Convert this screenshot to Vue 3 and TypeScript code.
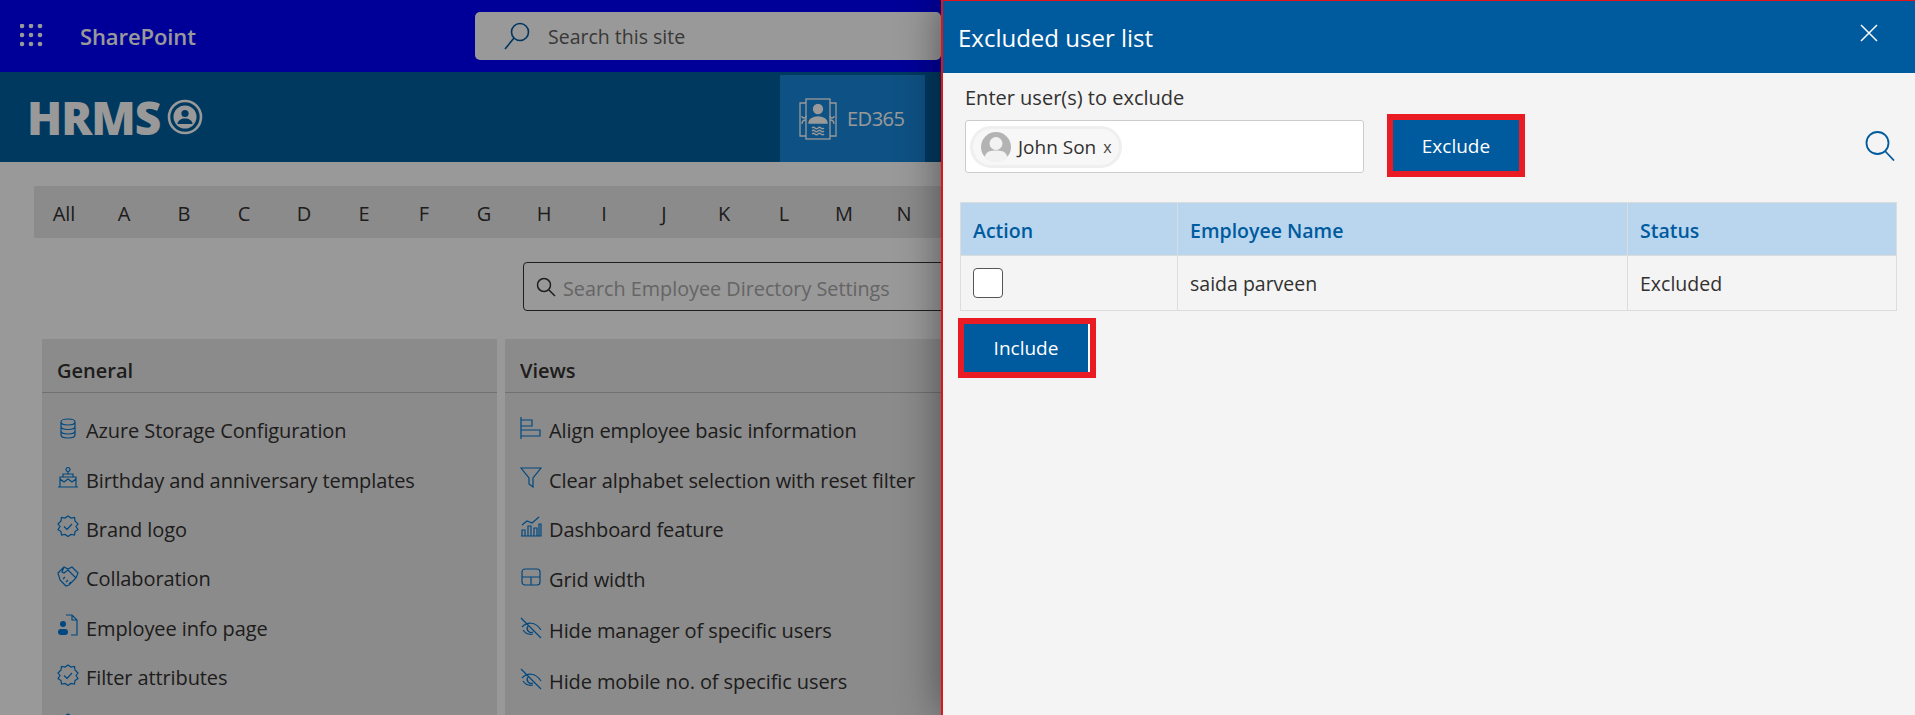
<script setup lang="ts">
const letters = ['All', ...'ABCDEFGHIJKLMN'.split('')]

const generalItems = [
  { label: 'Azure Storage Configuration', icon: 'db' },
  { label: 'Birthday and anniversary templates', icon: 'cake' },
  { label: 'Brand logo', icon: 'badge' },
  { label: 'Collaboration', icon: 'hands' },
  { label: 'Employee info page', icon: 'person' },
  { label: 'Filter attributes', icon: 'badge' },
  // only the tip of this row's icon is on screen
  { label: '', icon: 'badge' }
]

const viewItems = [
  { label: 'Align employee basic information', icon: 'align' },
  { label: 'Clear alphabet selection with reset filter', icon: 'funnel' },
  { label: 'Dashboard feature', icon: 'chart' },
  { label: 'Grid width', icon: 'grid' },
  { label: 'Hide manager of specific users', icon: 'hide' },
  { label: 'Hide mobile no. of specific users', icon: 'hide' }
]

const iconPaths: Record<string, string> = {
  db: 'M4 5c0-4 14-4 14 0v13c0 4-14 4-14 0zM4 5c0 4 14 4 14 0M4 9.500c0 4 14 4 14 0M4 14c0 4 14 4 14 0',
  cake: 'M1 21h20M3 21v-10h16v10M3 13l4 3 4-3 4 3 4-3M6 11V8h10v3M11 8V6M11 1.500a2 2 0 1 1-.01 0',
  badge: 'M11 1l3 2 3.500-.5.500 3.500 3 3-2 2.500 2 3-3 2-.5 3.500-3.500-.5-3 2-3-2-3.500.5-.5-3.500-3-2 2-3-2-2.500 3-3 .5-3.500 3.500.5zM7 11.500l3 3 5-5.500',
  hands: 'M1 8l6-6 4 2 4-2 6 6-2 5-7 7-3 1-3-3-3-3zM7 2L5 7l2 1 4-3 8 8M6 14l2-2M9 17l2-2M12 19l2-2',
  person: 'M9 1h6l5 5v15h-6M15 1v5h5',
  align: 'M1 0v22M1 3h11v6H1M1 13h19v6H1',
  funnel: 'M1 2h20l-8 10v9l-4-3v-6z',
  chart: 'M1 21h20M2 15h3v6H2zM8 11h3v10H8zM14 13h3v8h-3zM19 9h2v12h-2zM2 10l5-4 5 2 7-6',
  grid: 'M5 3h12a3 3 0 0 1 3 3v10a3 3 0 0 1-3 3H5a3 3 0 0 1-3-3V6a3 3 0 0 1 3-3zM2 11h18M11 11v8',
  hide: 'M1 1l20 20M2 10c5-5 13-6 19 3M3 13c2 3 6 5 10 4M8 9a4 4 0 0 0 5 6'
}
</script>

<template>
  <div class="page">
    <div class="behind">
      <header class="suite-bar">
        <svg class="waffle" width="24" height="24" viewBox="0 0 24 24" fill="#fff">
          <template v-for="row in 3" :key="row">
            <circle v-for="col in 3" :key="col" :cx="col * 9 - 7" :cy="row * 9 - 7" r="2.300" />
          </template>
        </svg>
        <span class="brand">SharePoint</span>
        <div class="site-search">
          <svg width="30" height="30" viewBox="0 0 30 30" fill="none" stroke="#005a9e" stroke-width="1.600">
            <circle cx="18" cy="11" r="8.500" />
            <path d="M12 17L3 28" />
          </svg>
          <span>Search this site</span>
        </div>
      </header>

      <div class="hrms-bar">
        <div class="logo">
          <span>HRMS</span>
          <svg width="36" height="36" viewBox="0 0 36 36" fill="none">
            <circle cx="18" cy="18" r="16" stroke="#fff" stroke-width="2.600" />
            <circle cx="18" cy="18" r="11.500" fill="#fff" />
            <circle cx="18" cy="14.500" r="3.600" fill="#0060a0" />
            <path d="M10.500 25c0-7.500 15-7.500 15 0z" fill="#0060a0" />
          </svg>
        </div>
        <div class="tile">
          <svg width="38" height="42" viewBox="0 0 38 42" fill="none" stroke="#fff" stroke-width="1.300">
            <path d="M7 5H1v33h6M31 5h6v33h-6" />
            <rect x="7" y="1" width="24" height="40" />
            <circle cx="19" cy="11" r="4.500" fill="#fff" />
            <path d="M10 25c0-8 18-8 18 0z" fill="#fff" />
            <path d="M3 18a2 2 0 1 0 4 0M3 26c0-3 1-4 4-4M35 18a2 2 0 1 1-4 0M35 26c0-3-1-4-4-4" />
            <path d="M13 30q1.500-1.500 3 0t3 0 3 0 3 0M13 33q1.500-1.500 3 0t3 0 3 0 3 0M13 36q1.500-1.500 3 0t3 0 3 0 3 0" />
          </svg>
          <span>ED365</span>
        </div>
      </div>

      <main class="settings">
        <nav class="alphabet">
          <a v-for="letter in letters" :key="letter">{{ letter }}</a>
        </nav>

        <div class="settings-search">
          <svg width="20" height="20" viewBox="0 0 20 20" fill="none" stroke="#333" stroke-width="1.500">
            <circle cx="8" cy="8" r="6.500" />
            <path d="M13 13l6 6" />
          </svg>
          <span>Search Employee Directory Settings</span>
        </div>

        <div class="cards">
          <section class="card">
            <h3>General</h3>
            <ul>
              <li v-for="item in generalItems" :key="item.icon + item.label">
                <svg width="22" height="22" viewBox="0 0 22 22" fill="none" stroke="#0078d4" stroke-width="1.200">
                  <path :d="iconPaths[item.icon]" />
                  <template v-if="item.icon === 'person'">
                    <circle cx="6" cy="10" r="3" fill="#0078d4" stroke="none" />
                    <rect x="1" y="15" width="10" height="6" rx="3" fill="#0078d4" stroke="none" />
                  </template>
                </svg>
                <span>{{ item.label }}</span>
              </li>
            </ul>
          </section>
          <section class="card views">
            <h3>Views</h3>
            <ul>
              <li v-for="item in viewItems" :key="item.label">
                <svg width="22" height="22" viewBox="0 0 22 22" fill="none" stroke="#0078d4" stroke-width="1.200">
                  <path :d="iconPaths[item.icon]" />
                </svg>
                <span>{{ item.label }}</span>
              </li>
            </ul>
          </section>
        </div>
      </main>
    </div>
    <div class="scrim"></div>

    <aside class="panel">
      <div class="panel-head">
        <h2>Excluded user list</h2>
        <svg width="18" height="18" viewBox="0 0 18 18" stroke="#fff" stroke-width="1.500">
          <path d="M1 1l16 16M17 1L1 17" />
        </svg>
      </div>
      <div class="panel-body">
        <label>Enter user(s) to exclude</label>
        <div class="picker-row">
          <div class="picker">
            <div class="pill">
              <svg class="avatar" width="30" height="30" viewBox="0 0 30 30">
                <circle cx="15" cy="15" r="15" fill="#b3b3b3" />
                <circle cx="15" cy="11.500" r="6.500" fill="#f2f2f2" />
                <path d="M3.500 25c2-6 6-6.500 11.500-6.500s9.500.5 11.500 6.500A15 15 0 0 1 3.500 25z" fill="#f2f2f2" />
              </svg>
              <span class="pill-name">John Son</span>
              <span class="pill-x">x</span>
            </div>
          </div>
          <div class="callout">
            <button class="btn exclude">Exclude</button>
          </div>
          <svg class="find" width="30" height="30" viewBox="0 0 30 30" fill="none" stroke="#005a9e" stroke-width="1.800">
            <circle cx="12.500" cy="12" r="11" />
            <path d="M20 20l9 9.500" />
          </svg>
        </div>

        <table>
          <thead>
            <tr>
              <th class="col-action">Action</th>
              <th class="col-name">Employee Name</th>
              <th>Status</th>
            </tr>
          </thead>
          <tbody>
            <tr>
              <td><span class="check"></span></td>
              <td>saida parveen</td>
              <td>Excluded</td>
            </tr>
          </tbody>
        </table>

        <div class="callout include-wrap">
          <button class="btn include">Include</button>
        </div>
      </div>
    </aside>
  </div>
</template>

<style scoped>
.page {
  position: relative;
  width: 1915px;
  height: 715px;
  overflow: hidden;
  font-family: "Open Sans", "Noto Sans", sans-serif;
  color: #323130;
  background: #fff;
}

.behind {
  width: 941px;
  height: 100%;
  overflow: hidden;
}

/* dims everything behind the panel */
.scrim {
  position: absolute;
  inset: 0;
  background: rgba(0, 0, 0, 0.4);
}

.suite-bar {
  height: 72px;
  background: #0000ff;
  display: flex;
  align-items: center;
  padding-left: 20px;
  box-sizing: border-box;
}

.waffle {
  flex-shrink: 0;
}

.brand {
  margin-left: 36px;
  width: 395px;
  color: #fff;
  font-size: 22px;
  font-weight: 600;
  letter-spacing: -0.1px;
}

.site-search {
  flex: 1;
  height: 48px;
  background: #fff;
  border-radius: 5px;
  display: flex;
  align-items: center;
  gap: 16px;
  padding-left: 27px;
  font-size: 19.500px;
  color: #605e5c;
}

.hrms-bar {
  height: 90px;
  background: #0060a0;
  display: flex;
  align-items: center;
  padding-left: 27px;
}

.logo {
  width: 753px;
  display: flex;
  align-items: center;
  gap: 7px;
  color: #fff;
  font-weight: 800;
  font-size: 46px;
  letter-spacing: -1px;
}

.tile {
  width: 145px;
  height: 87px;
  margin-top: 3px;
  background: #1888dc;
  display: flex;
  align-items: center;
  gap: 10px;
  padding-left: 19px;
  box-sizing: border-box;
  color: #fff;
  font-size: 20px;
  letter-spacing: -0.5px;
}

.settings {
  padding: 24px 0 0 34px;
}

.alphabet {
  height: 52px;
  padding-top: 3px;
  box-sizing: border-box;
  background: #e8e8e8;
  display: flex;
  align-items: center;
  font-size: 20px;
  color: #323130;
}

.alphabet a {
  flex: 0 0 60px;
  text-align: center;
}

.settings-search {
  margin: 24px 0 0 489px;
  width: 430px;
  height: 49px;
  box-sizing: border-box;
  border: 1px solid #333;
  border-radius: 4px;
  background: #fff;
  display: flex;
  align-items: center;
  gap: 7px;
  padding-left: 12px;
  font-size: 19.800px;
  white-space: nowrap;
  color: #a8a8a8;
}

.settings-search span {
  padding-top: 3px;
}

.cards {
  margin: 28px 0 0 8px;
  display: flex;
  gap: 8px;
}

.card {
  width: 455px;
  height: 400px;
  background: #e8e8e8;
  flex-shrink: 0;
}

.card.views {
  width: 440px;
}

.card h3 {
  margin: 0;
  height: 53px;
  line-height: 64px;
  padding-left: 15px;
  font-size: 20px;
  font-weight: 600;
  border-bottom: 1px solid #bdbdbd;
}

.card ul {
  list-style: none;
  margin: 0;
  padding: 13px 0 0 15px;
}

.card li {
  height: 49.400px;
  display: flex;
  align-items: center;
  gap: 7px;
  font-size: 20px;
  letter-spacing: -0.1px;
  white-space: nowrap;
}

.card.views li:nth-child(n + 4) {
  height: 51px;
}

.card li svg {
  flex-shrink: 0;
  margin-top: -6px;
}

.panel {
  position: absolute;
  top: 0;
  left: 941px;
  right: 0;
  bottom: 0;
  background: #f4f4f4;
  border-left: 2px solid #e3131b;
  border-top: 1px solid #e3131b;
  box-sizing: border-box;
  box-shadow: 0 0 40px rgba(0, 0, 0, 0.45);
}

.panel-head {
  height: 72px;
  background: #005a9e;
  color: #fff;
  display: flex;
  align-items: center;
  justify-content: space-between;
  padding: 0 37px 0 15px;
}

.panel-head h2 {
  margin: 0;
  font-size: 24px;
  font-weight: 400;
}

.panel-head svg {
  margin-top: -9px;
}

.panel-body {
  padding: 9px 18px 0 17px;
}

label {
  display: block;
  margin-left: 5px;
  font-size: 20px;
  font-weight: 500;
  line-height: 32px;
}

.picker-row {
  display: flex;
  align-items: center;
  height: 63px;
}

.picker {
  margin: 2px 0 0 5px;
  width: 399px;
  height: 53px;
  background: #fff;
  border: 1px solid #ccc;
  border-radius: 3px;
  box-sizing: border-box;
  display: flex;
  align-items: center;
  padding-left: 4px;
}

.pill {
  width: 152px;
  height: 42px;
  box-sizing: border-box;
  border: 3px solid #efefef;
  border-radius: 21px;
  background: #f7f7f7;
  display: flex;
  align-items: center;
  padding-left: 8px;
}

.avatar {
  flex-shrink: 0;
}

.pill-name {
  margin-left: 7px;
  font-size: 19px;
  font-weight: 500;
  white-space: nowrap;
}

.pill-x {
  margin-left: 7px;
  font-size: 16px;
  color: #444;
}

.callout {
  border: 6px solid #e81c22;
  box-sizing: border-box;
  flex-shrink: 0;
}

.picker-row .callout {
  margin-left: 23px;
  width: 138px;
  height: 63px;
}

.btn {
  display: block;
  width: 100%;
  height: 100%;
  border: none;
  padding: 0;
  background: #005a9e;
  color: #fff;
  font-family: inherit;
  font-size: 19px;
}

.find {
  margin-left: auto;
  margin-right: 2px;
}

table {
  width: 937px;
  margin: 25px 0 0 0;
  border-collapse: collapse;
  table-layout: fixed;
  font-size: 19.500px;
}

th,
td {
  border: 1px solid #dcdcdc;
  padding: 0 0 0 12px;
  text-align: left;
}

th {
  height: 50px;
  padding-top: 2px;
  background: #b9d6ee;
  color: #005a9e;
  font-weight: 600;
}

td {
  height: 54px;
}

.col-action {
  width: 204px;
}

.col-name {
  width: 437px;
}

.check {
  display: block;
  width: 30px;
  height: 30px;
  box-sizing: border-box;
  border: 1px solid #555;
  border-radius: 4px;
  background: #fff;
}

.include-wrap {
  width: 138px;
  height: 60px;
  margin: 7px 0 0 -2px;
}

.include {
  box-sizing: border-box;
  border-right: 2px solid #fff;
}
</style>

<style>
body {
  margin: 0;
}
</style>
